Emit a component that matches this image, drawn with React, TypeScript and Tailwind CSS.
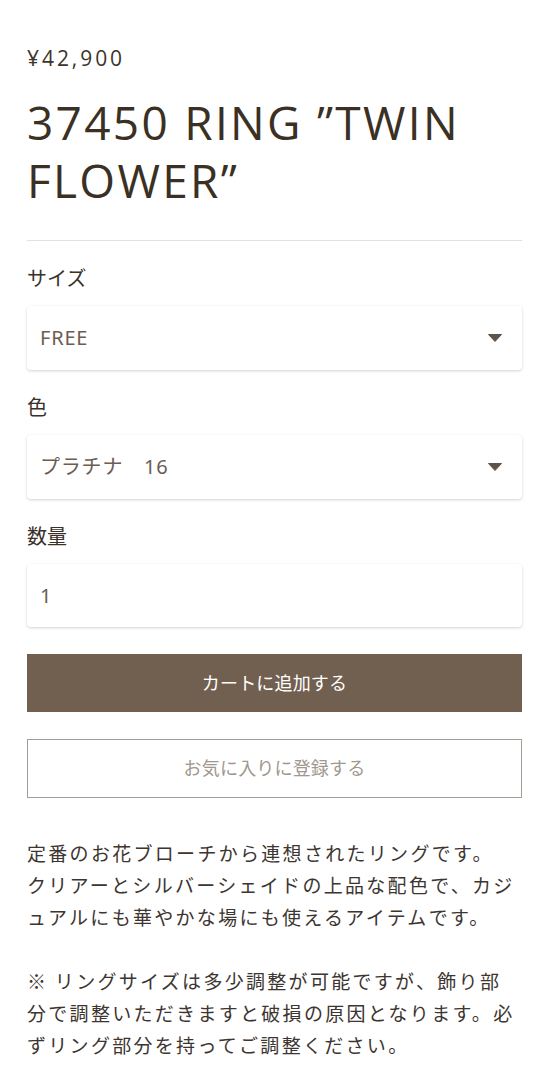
import { useState } from 'react';

const jp = '"Noto Sans", "Noto Sans CJK JP", sans-serif';
const cjk = '"Noto Sans CJK JP", "Noto Sans", sans-serif';
const latin = '"Open Sans", "Noto Sans", sans-serif';

function Caret() {
  return (
    <svg width="14" height="8" viewBox="0 0 14 8" className="shrink-0">
      <path d="M0.5 0.5 L13.5 0.5 L7 7.5 Z" fill="#5f5247" strokeLinejoin="round" stroke="#5f5247" strokeWidth="1" />
    </svg>
  );
}

function SelectBox({ value }: { value: string }) {
  return (
    <div className="flex items-center justify-between h-[64px] pl-[13px] pr-[20px] bg-white rounded-[4px] shadow-[0_1px_3px_rgba(0,0,0,0.18)] text-[20px] tracking-[0.04em] text-[#6b5d52]">
      <span className="whitespace-pre">{value}</span>
      <Caret />
    </div>
  );
}

export default function App() {
  const [qty, setQty] = useState('1');

  return (
    <div className="w-[549px] min-h-[1080px] bg-white px-[27px] pt-[43px] text-[#3a3129]" style={{ fontFamily: jp }}>
      {/* Price + title */}
      <p className="text-[21px] tracking-[0.14em] text-[#3d342b] leading-[30px]" style={{ fontFamily: latin }}>
        ¥42,900
      </p>
      <h1
        className="mt-[20px] text-[46px] leading-[58px] tracking-[0.05em] font-medium text-[#3b3024]"
        style={{ fontFamily: latin }}
      >
        37450 RING ”TWIN FLOWER”
      </h1>

      <div className="mt-[31px] h-px bg-[#e4e0dc]" />

      {/* Options */}
      <div className="mt-[24px] text-[20px] leading-[28px]">サイズ</div>
      <div className="mt-[13px]">
        <SelectBox value="FREE" />
      </div>

      <div className="mt-[24px] text-[20px] leading-[28px]">色</div>
      <div className="mt-[13px]">
        <SelectBox value="プラチナ　16" />
      </div>

      <div className="mt-[24px] text-[20px] leading-[28px]">数量</div>
      <div className="mt-[13px]">
        <input
          value={qty}
          onChange={e => setQty(e.target.value)}
          className="w-full h-[63px] px-[13px] bg-white rounded-[4px] shadow-[0_1px_3px_rgba(0,0,0,0.18)] text-[20px] text-[#6b5d52] outline-none"
        />
      </div>

      {/* Buttons */}
      <button className="mt-[27px] w-full h-[58px] bg-[#715f50] text-white text-[18px] tracking-[0.01em]">
        カートに追加する
      </button>
      <button className="mt-[27px] w-full h-[59px] border border-[#a59d95] bg-white text-[#a0978f] text-[18px] tracking-[0.01em]">
        お気に入りに登録する
      </button>

      {/* Description */}
      <div className="mt-[39px] text-[19px] leading-[32px] tracking-[2.3px] text-[#3d3530]" style={{ fontFamily: cjk }}>
        <p>
          定番のお花ブローチから連想されたリングです。
          <br />
          クリアーとシルバーシェイドの上品な配色で、カジュアルにも華やかな場にも使えるアイテムです。
        </p>
        <p className="mt-[32px]">※ リングサイズは多少調整が可能ですが、飾り部分で調整いただきますと破損の原因となります。必ずリング部分を持ってご調整ください。</p>
      </div>
    </div>
  );
}
